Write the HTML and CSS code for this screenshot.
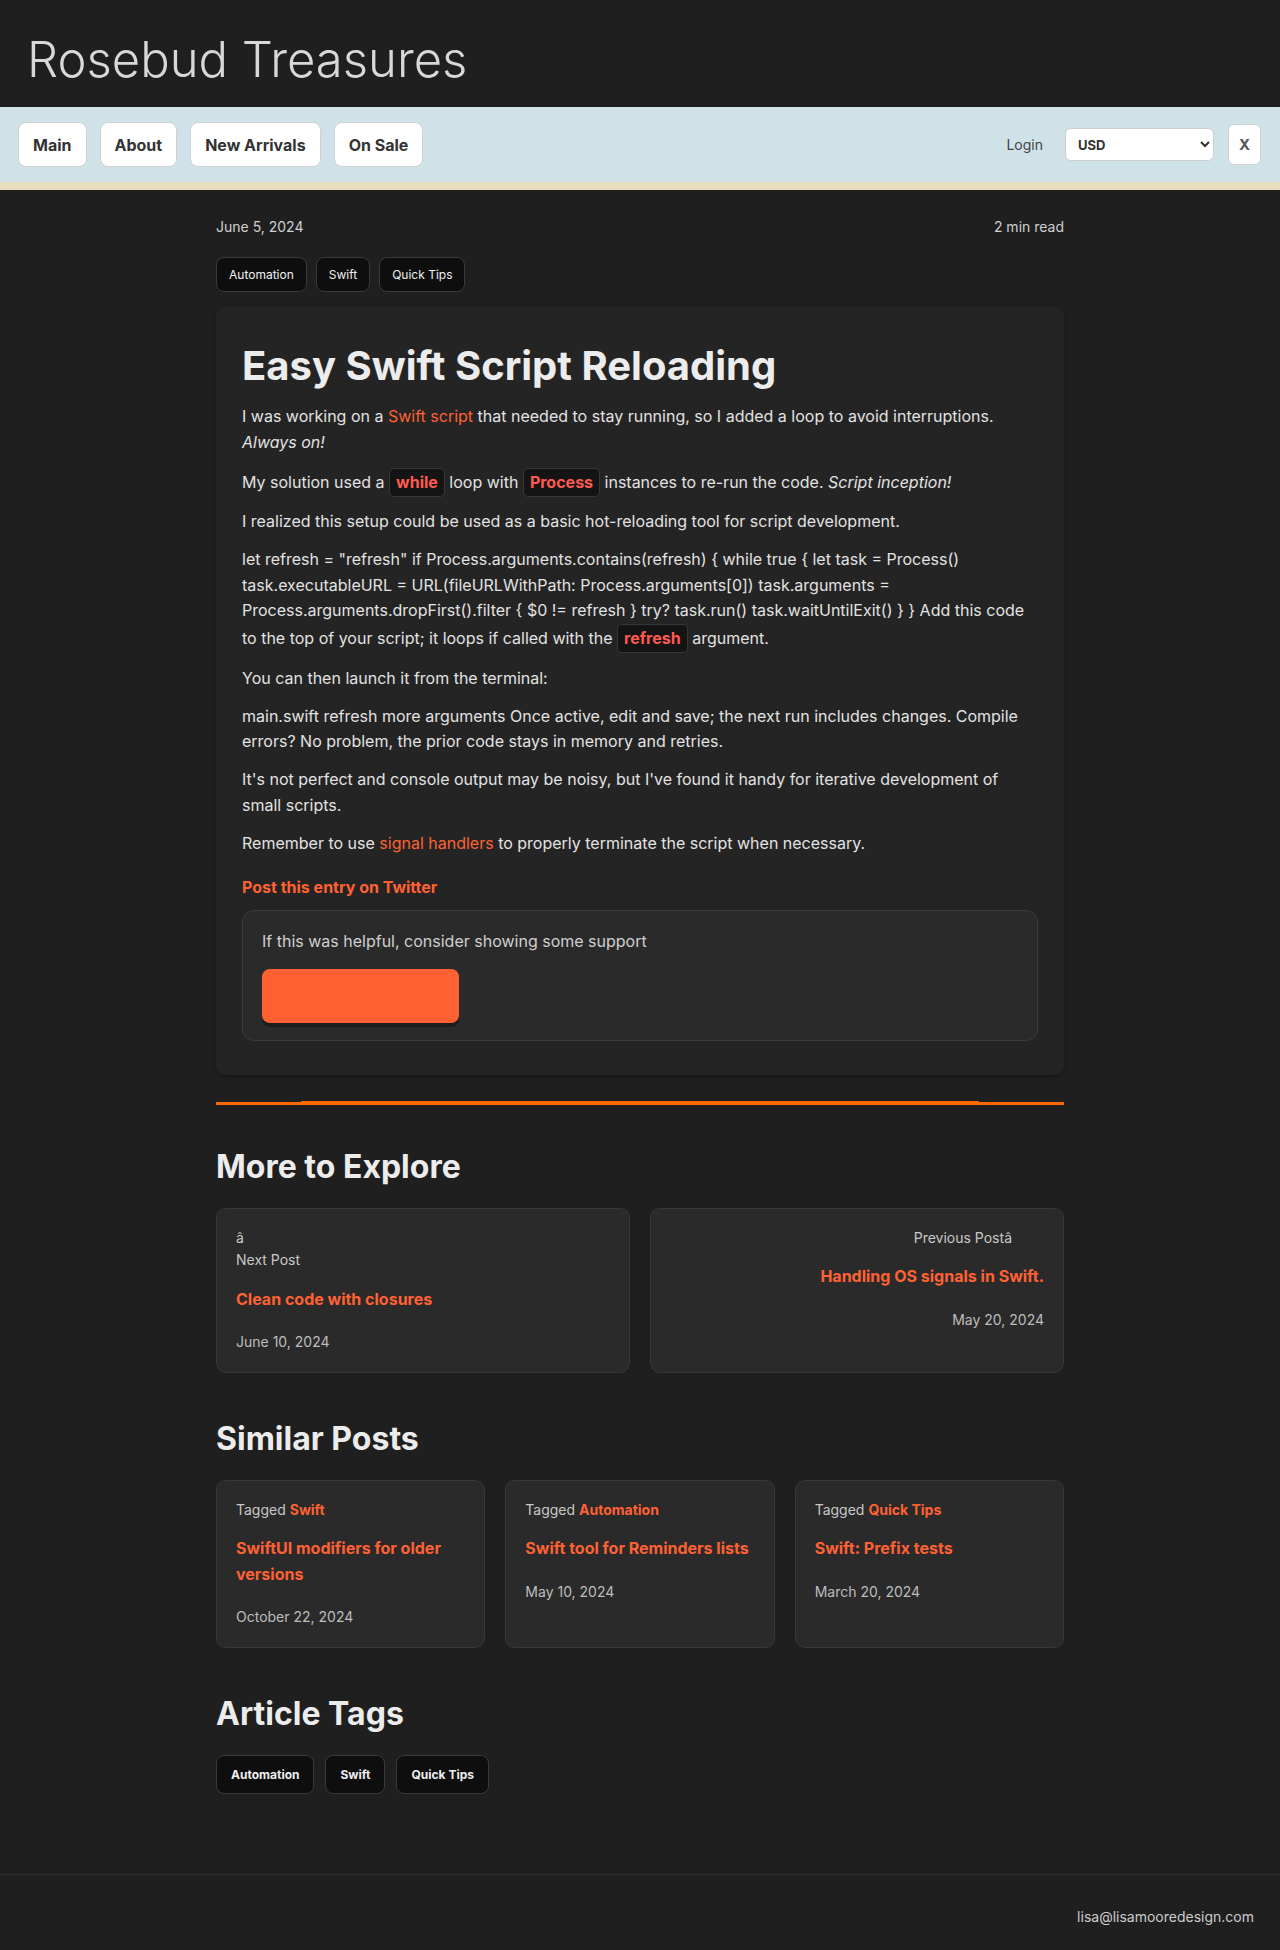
FILE: index.html
```html
<!DOCTYPE html>
<html lang="en">
<head>
<meta charset="utf-8">
<title>Easy Swift Script Reloading - Rosebud Treasures</title>
<link rel="stylesheet" href="styles.css">
</head>
<body>
<header class="site-header">
  <h1 class="site-title">Rosebud Treasures</h1>
</header>
<nav class="site-nav">
  <div class="nav-links">
    <a class="nav-btn" href="#">Main</a>
    <a class="nav-btn" href="#">About</a>
    <a class="nav-btn" href="#">New Arrivals</a>
    <a class="nav-btn" href="#">On Sale</a>
  </div>
  <div class="nav-tools">
    <a class="login" href="#">Login</a>
    <select class="currency"><option>USD</option><option>EUR</option></select>
    <button class="close-btn">X</button>
  </div>
</nav>

<main class="container">
  <div class="post-meta">
    <span>June 5, 2024</span>
    <span>2 min read</span>
  </div>
  <div class="tag-row">
    <a class="tag" href="#">Automation</a>
    <a class="tag" href="#">Swift</a>
    <a class="tag" href="#">Quick Tips</a>
  </div>

  <article class="post">
    <h1 class="post-title">Easy Swift Script Reloading</h1>
    <p>I was working on a <a href="#">Swift script</a> that needed to stay running, so I added a loop to avoid interruptions. <em>Always on!</em></p>
    <p>My solution used a <code>while</code> loop with <code>Process</code> instances to re-run the code. <em>Script inception!</em></p>
    <p>I realized this setup could be used as a basic hot-reloading tool for script development.</p>
    <p>let refresh = "refresh" if Process.arguments.contains(refresh) { while true { let task = Process() task.executableURL = URL(fileURLWithPath: Process.arguments[0]) task.arguments = Process.arguments.dropFirst().filter { $0 != refresh } try? task.run() task.waitUntilExit() } } Add this code to the top of your script; it loops if called with the <code>refresh</code> argument.</p>
    <p>You can then launch it from the terminal:</p>
    <p>main.swift refresh more arguments Once active, edit and save; the next run includes changes. Compile errors? No problem, the prior code stays in memory and retries.</p>
    <p>It's not perfect and console output may be noisy, but I've found it handy for iterative development of small scripts.</p>
    <p>Remember to use <a href="#">signal handlers</a> to properly terminate the script when necessary.</p>
    <a class="share" href="#">Post this entry on Twitter</a>
    <div class="support">
      <p class="support-text">If this was helpful, consider showing some support</p>
      <a class="support-btn" href="#"></a>
    </div>
  </article>

  <div class="rule"></div>

  <section class="section explore">
    <h2>More to Explore</h2>
    <div class="nav-cards">
      <a class="card nav-card" href="#">
        <span class="label"><span class="arrow">â</span>Next Post</span>
        <span class="card-title">Clean code with closures</span>
        <span class="date">June 10, 2024</span>
      </a>
      <a class="card nav-card right" href="#">
        <span class="label"><span class="prev">Previous Postâ</span></span>
        <span class="card-title">Handling OS signals in Swift.</span>
        <span class="date">May 20, 2024</span>
      </a>
    </div>
  </section>

  <section class="section similar">
    <h2>Similar Posts</h2>
    <div class="similar-grid">
      <div class="card">
        <span class="label">Tagged <a href="#">Swift</a></span>
        <a class="card-title" href="#">SwiftUI modifiers for older versions</a>
        <span class="date">October 22, 2024</span>
      </div>
      <div class="card">
        <span class="label">Tagged <a href="#">Automation</a></span>
        <a class="card-title" href="#">Swift tool for Reminders lists</a>
        <span class="date">May 10, 2024</span>
      </div>
      <div class="card">
        <span class="label">Tagged <a href="#">Quick Tips</a></span>
        <a class="card-title" href="#">Swift: Prefix tests</a>
        <span class="date">March 20, 2024</span>
      </div>
    </div>
  </section>

  <section class="section tags-section">
    <h2>Article Tags</h2>
    <div class="tag-row big">
      <a class="tag" href="#">Automation</a>
      <a class="tag" href="#">Swift</a>
      <a class="tag" href="#">Quick Tips</a>
    </div>
  </section>
</main>

<footer class="site-footer">
  <span>lisa@lisamooredesign.com</span>
</footer>
</body>
</html>
```

FILE: styles.css
```css
* { box-sizing: border-box; }

html, body {
  margin: 0;
  padding: 0;
  background: #1f1f1f;
}

body {
  font-family: Inter, "Noto Sans", "Liberation Sans", sans-serif;
  color: #e2e2e2;
  font-size: 16px;
}

a { text-decoration: none; color: #ff6133; }

/* Header */
.site-header {
  height: 107px;
  padding: 31px 24px 0 27px;
}
.site-title {
  margin: 0;
  font-size: 49px;
  line-height: 58px;
  font-weight: 300;
  color: #d8d8d8;
}

/* Nav */
.site-nav {
  height: 83px;
  background: #cfe2e8;
  border-bottom: 8px solid #e8dfc0;
  padding: 0 19px 0 18px;
  display: flex;
  align-items: center;
  justify-content: space-between;
}
.nav-links {
  display: flex;
  gap: 13px;
}
.nav-btn {
  display: inline-flex;
  align-items: center;
  height: 45px;
  padding: 0 14px;
  background: #fff;
  border: 1px solid #d2d2d2;
  border-radius: 8px;
  color: #333;
  font-weight: 700;
  font-size: 16px;
}
.nav-tools {
  display: flex;
  align-items: center;
}
.login {
  color: #444;
  font-size: 14px;
  margin-right: 22px;
}
.currency {
  width: 149px;
  height: 33px;
  border: 1px solid #cfcfcf;
  border-radius: 6px;
  background: #fff;
  color: #333;
  font-family: Inter, "Liberation Sans", sans-serif;
  font-weight: 700;
  font-size: 13px;
  padding: 0 8px;
  margin-right: 14px;
}
.close-btn {
  width: 33px;
  height: 41px;
  background: #fff;
  border: 1px solid #d2d2d2;
  border-radius: 6px;
  color: #555;
  font-family: Inter, "Liberation Sans", sans-serif;
  font-weight: 700;
  font-size: 15px;
  padding: 0;
}

/* Main container */
.container {
  width: 848px;
  margin: 0 auto;
  padding: 27px 0 80px;
}

.post-meta {
  display: flex;
  justify-content: space-between;
  font-size: 14px;
  line-height: 20px;
  color: #d0d0d0;
}

.tag-row {
  display: flex;
  gap: 9px;
  margin-top: 20px;
}
.tag {
  display: inline-block;
  padding: 9px 12px;
  font-size: 12px;
  line-height: 15px;
  color: #f0f0f0;
  background: #0e0e0e;
  border: 1px solid #3a3a3a;
  border-radius: 8px;
}
.tag-row.big { gap: 11px; margin-top: 0; }
.tag-row.big .tag {
  padding: 11px 14px;
  font-weight: 700;
}

/* Article card */
.post {
  margin-top: 14px;
  background: #242424;
  border-radius: 10px;
  padding: 26px 26px 34px;
  box-shadow: 0 2px 4px rgba(0,0,0,0.25);
}
.post-title {
  margin: 10px 0 14px;
  font-size: 40px;
  line-height: 48px;
  font-weight: 700;
  color: #ececec;
}
.post p {
  margin: 0 0 12.5px;
  line-height: 25.6px;
}
.post code {
  display: inline-block;
  font-family: Inter, "Liberation Sans", sans-serif;
  font-weight: 700;
  font-size: 16px;
  line-height: 19px;
  color: #ff5a4f;
  background: #141414;
  border: 1px solid #363636;
  border-radius: 5px;
  padding: 4px 6px;
}
.share {
  display: block;
  margin-top: 18px;
  font-weight: 700;
  line-height: 25.6px;
}
.support {
  margin-top: 10px;
  background: #2a2a2a;
  border: 1px solid #3b3b3b;
  border-radius: 12px;
  padding: 18px 19px 17px;
}
.post .support-text {
  margin: 0 0 14px;
  color: #cfcfcf;
}
.support-btn {
  display: block;
  width: 197px;
  height: 54px;
  background: #ff6133;
  border-radius: 8px;
  box-shadow: 0 4px 0 #1d1d1d;
}

/* Rule */
.rule {
  margin-top: 26px;
  height: 4px;
  background:
    linear-gradient(#ff6a00, #ff6a00) center top / 80% 1px no-repeat,
    linear-gradient(#ff6a00, #ff6a00) left bottom / 100% 3px no-repeat;
}

/* Sections */
.section h2 {
  margin: 0 0 22px;
  font-size: 32px;
  line-height: 38px;
  font-weight: 700;
  color: #ececec;
}
.explore { margin-top: 43px; }
.similar { margin-top: 47px; }
.tags-section { margin-top: 47px; }

.card {
  display: flex;
  flex-direction: column;
  background: #2a2a2a;
  border: 1px solid #383838;
  border-radius: 10px;
  padding: 18px 19px 18px;
}
.label {
  font-size: 14px;
  line-height: 22.4px;
  color: #c8c8c8;
}
.label a { font-weight: 700; }
.arrow { display: block; }
.prev { padding-right: 32px; }
.card-title {
  margin-top: 15px;
  font-weight: 700;
  line-height: 25.6px;
  color: #ff6133;
}
.date {
  margin-top: 19px;
  font-size: 14px;
  line-height: 22.4px;
  color: #bdbdbd;
}

.nav-cards {
  display: grid;
  grid-template-columns: 1fr 1fr;
  gap: 20px;
}
.nav-card.right {
  text-align: right;
}

.similar-grid {
  display: grid;
  grid-template-columns: repeat(3, 1fr);
  gap: 20px;
}

/* Footer */
.site-footer {
  border-top: 1px solid #2e2e2e;
  padding: 32px 26px 26px;
  text-align: right;
  font-size: 14px;
  line-height: 20px;
  color: #cccccc;
}
```
